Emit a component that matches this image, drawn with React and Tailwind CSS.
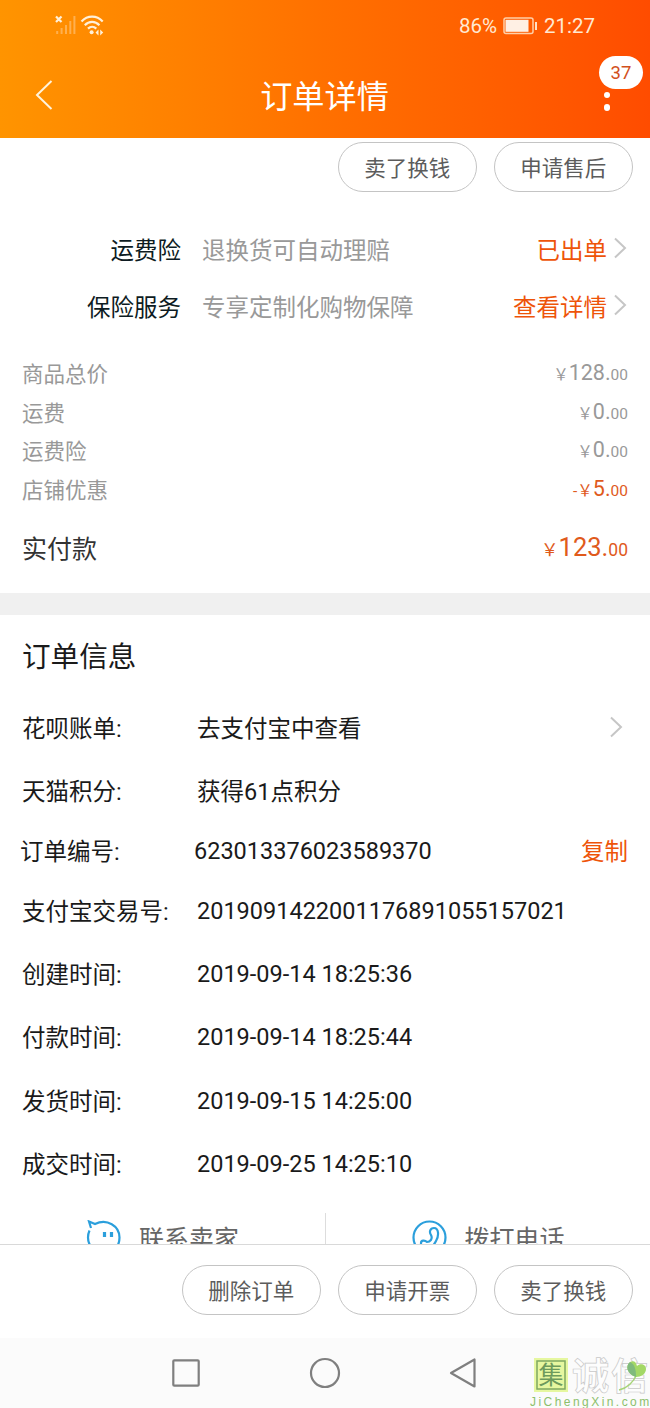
const SERVICES = [
  { label: '运费险', text: '退换货可自动理赔', action: '已出单' },
  { label: '保险服务', text: '专享定制化购物保障', action: '查看详情' },
]

const PRICES = [
  { label: '商品总价', whole: '128' },
  { label: '运费', whole: '0' },
  { label: '运费险', whole: '0' },
  { label: '店铺优惠', whole: '5', discount: true },
]

const TIMES = [
  { label: '创建时间:', value: '2019-09-14 18:25:36' },
  { label: '付款时间:', value: '2019-09-14 18:25:44' },
  { label: '发货时间:', value: '2019-09-15 14:25:00' },
  { label: '成交时间:', value: '2019-09-25 14:25:10' },
]

function PillButton({ children }) {
  return (
    <button className="h-[50px] w-[138.5px] rounded-full border border-[#c4c4c4] bg-white pt-[3px] text-[21.5px] leading-none text-[#5c5c5c]">
      {children}
    </button>
  )
}

function Chevron({ className }) {
  return (
    <svg className={className} width="14" height="22" viewBox="0 0 14 22" fill="none" stroke="#c6c6c6" strokeWidth="2">
      <path d="M2 1.5 12 11 2 20.5" />
    </svg>
  )
}

function InfoRow({ label, value, className = 'h-[63px]', labelClass = 'w-[175px]', valueClass = '', children }) {
  return (
    <div className={`flex items-center ${className}`}>
      <span className={`shrink-0 pt-[2px] ${labelClass}`}>{label}</span>
      <span className={`flex-1 ${valueClass}`}>{value}</span>
      {children}
    </div>
  )
}

function StatusBar() {
  return (
    <div className="flex h-[51px] items-center justify-between pl-[55px] pr-[55px] text-[20.5px] text-[#ffe9d2]">
      <svg width="50" height="22" viewBox="0 0 50 22" fill="none">
        <path d="M1 1.5l5.500 5.500M6.5 1.5 1 7" stroke="#fff0d8" strokeWidth="2.200" />
        <path d="M2.2 19v-3M6.6 19v-6M11 19V10M15.3 19V6M19.4 19V1" stroke="#ffb04f" strokeWidth="2" />
        <g stroke="#fff0d8" strokeWidth="2.200">
          <path d="M26.5 6.500c6-6.400 15.200-6.400 21.200 0" />
          <path d="M29.8 10.200c4.200-4.400 10.400-4.400 14.600 0" />
          <path d="M33 13.600c2.500-2.500 5.800-2.500 8.300 0" />
        </g>
        <circle cx="36.6" cy="17.3" r="2" fill="#fff0d8" />
        <path d="M43.5 14.500v6l-3-3zM45.2 14.500v6l3-3z" fill="#fff0d8" />
      </svg>
      <div className="flex items-center">
        <span className="pt-[2px]">86%</span>
        <svg className="ml-[6px] mr-[6px]" width="35" height="18" viewBox="0 0 35 18">
          <rect x="1" y="1" width="29" height="15.500" rx="2" fill="none" stroke="#ffcfa8" strokeWidth="1.5" />
          <rect x="2.5" y="2.800" width="23" height="12" fill="#fff0e4" />
          <path d="M33 5v8" stroke="#ffe0c4" strokeWidth="2" />
        </svg>
        <span className="pt-[2px]">21:27</span>
      </div>
    </div>
  )
}

function Header() {
  return (
    <header className="h-[138px] shrink-0 bg-linear-to-r from-[#ff9400] via-[#ff7000] to-[#ff4c00]">
      <StatusBar />
      <div className="flex h-[87px] items-center justify-between pl-[35px] pr-[39px]">
        <svg width="18" height="30" viewBox="0 0 18 30" fill="none" stroke="#fff3dc" strokeWidth="2">
          <path d="M16.5 1 2 15l14.5 14" />
        </svg>
        <h1 className="mr-[7px] pt-[5px] text-[32.2px] leading-none text-white">订单详情</h1>
        <div className="relative flex h-8 w-2 flex-col items-center justify-end gap-[6px]">
          <i className="size-[6.5px] rounded-full bg-white" />
          <i className="size-[6.5px] rounded-full bg-white" />
          <span className="absolute -top-[23px] -left-[4px] flex h-[33px] w-[44px] items-center justify-center rounded-full bg-white pt-[2px] text-[18.5px] text-[#d2501c]">
            37
          </span>
        </div>
      </div>
    </header>
  )
}

function Watermark() {
  return (
    <div className="absolute right-0 bottom-0 w-[123px]">
      <svg width="123" height="58" viewBox="0 0 123 58">
        <rect x="7" y="8" width="34" height="34" fill="#e6f7a0" />
        <rect x="10" y="11" width="28" height="28" fill="none" stroke="#7fa860" strokeWidth="1.5" />
        <text x="24" y="34" textAnchor="middle" fontSize="25" fill="#6d9a5c">集</text>
        <text x="45" y="40" fontSize="37" letterSpacing="2" fontWeight="700" fill="#fdfdfd" stroke="#c8c8c8" strokeWidth="0.7">诚信</text>
        <path d="M92 40c9-2 14-7 18-16" fill="none" stroke="#a6d478" strokeWidth="1.5" />
        <path d="M109 27c-9-3-11-11-6-15 4-2 6 0 7 4 3-3 9-2 9 3s-5 8-10 8z" fill="#a3d866" />
        <path d="M109 27c-9-3-11-11-6-15 5 2 6 8 6 15z" fill="#7fba7c" />
        <text x="3" y="55.500" fontSize="12" letterSpacing="2.450" fill="#8cc06c" fontFamily="Liberation Sans">JiChengXin.com</text>
      </svg>
    </div>
  )
}

export default function App() {
  return (
    <div className="flex h-[1408px] w-[650px] flex-col overflow-hidden bg-white font-['Roboto','Noto_Sans_CJK_SC',sans-serif] text-[23.5px] leading-none text-[#1a1a1a]">
      <Header />

      <main className="h-[1106px] shrink-0 overflow-hidden">
        <div className="flex justify-end gap-[17.5px] pt-[4px] pr-[17.5px]">
          <PillButton>卖了换钱</PillButton>
          <PillButton>申请售后</PillButton>
        </div>

        <section className="mt-[31px]">
          {SERVICES.map((s) => (
            <div key={s.label} className="flex h-[57px] items-center pr-[23px]">
              <span className="w-[181px] text-right text-[#0d1b22]">{s.label}</span>
              <span className="ml-[21px] flex-1 text-[#999]">{s.text}</span>
              <span className="text-[#ee5409]">{s.action}</span>
              <Chevron className="ml-[6px] -mt-[8px]" />
            </div>
          ))}
        </section>

        <section className="mt-[18px] px-[22px]">
          {PRICES.map((p) => (
            <div key={p.label} className="flex h-[38.6px] items-center justify-between text-[21.5px] text-[#999]">
              <span className="pt-[1px]">{p.label}</span>
              <span className={`pb-[3px] ${p.discount ? 'text-[#e05a1c]' : ''}`}>
                <span className="text-[15.5px]">{p.discount && '-'}￥</span>
                {p.whole}.<span className="text-[15.5px]">00</span>
              </span>
            </div>
          ))}
          <div className="mt-[16px] flex h-[48px] items-center justify-between text-[25px] text-[#333]">
            <span className="pt-[1px]">实付款</span>
            <span className="pb-[3px] text-[25.5px] text-[#e05a1c]">
              <span className="text-[17.5px]">￥</span>123.<span className="text-[17.5px]">00</span>
            </span>
          </div>
        </section>

        <div className="mt-[20px] h-[22px] bg-[#f0f0f0]" />

        <section className="px-[22px]">
          <h2 className="flex h-[82px] items-center pt-[1px] text-[28.6px]">订单信息</h2>
          <InfoRow label="花呗账单:" value="去支付宝中查看" valueClass="pt-[2px]">
            <Chevron className="mr-[5px] -mt-[3px]" />
          </InfoRow>
          <InfoRow label="天猫积分:" value="获得61点积分" valueClass="pt-[2px]" />
          <InfoRow label="订单编号:" value="623013376023589370" className="-ml-[2px] h-[57px]" labelClass="w-[174px]">
            <span className="pt-[2px] text-[#ee5409]">复制</span>
          </InfoRow>
          <InfoRow label="支付宝交易号:" value="2019091422001176891055157021" />
          {TIMES.map((t) => (
            <InfoRow key={t.label} {...t} className="h-[63.2px]" />
          ))}
        </section>

        <section className="mt-[17px] flex h-[50px] text-[25px] text-[#666]">
          <div className="flex flex-1 items-center border-r border-[#ddd] pl-[86px]">
            <svg className="mr-[17px]" width="36" height="36" viewBox="0 0 36 36" fill="none" stroke="#2b9fdc" strokeWidth="2.2">
              <path d="M5 8 3 1.500 9 4C21-2 33.500 6 33.500 17.500S24 34 17.500 34 2 27 2 17.500c0-3 .6-5 1.500-7" />
              <path d="M18.5 12v5M25.5 12v5" strokeWidth="3.2" />
            </svg>
            <span className="pt-[3px]">联系卖家</span>
          </div>
          <div className="flex flex-1 items-center pl-[86px]">
            <svg className="mr-[17px]" width="36" height="36" viewBox="0 0 36 36" fill="none" stroke="#2b9fdc" strokeWidth="2.2">
              <circle cx="17.5" cy="17.5" r="16" />
              <path d="M9 23c0-3 4-3 6-1 3 0 6-3 4-7-2-3-1-7 3-7 5 0 5 8 2 13-3 6-8 10-12 8-2-1-3-4-3-6z" />
            </svg>
            <span className="pt-[3px]">拨打电话</span>
          </div>
        </section>
      </main>

      <footer className="flex h-[94px] shrink-0 items-center justify-end gap-[17.5px] border-t border-[#d9d9d9] pr-[17.5px] pb-[3px]">
        <PillButton>删除订单</PillButton>
        <PillButton>申请开票</PillButton>
        <PillButton>卖了换钱</PillButton>
      </footer>

      <nav className="relative flex h-[70px] shrink-0 items-center bg-[#fbfbfb] pl-[172px]">
        <svg width="306" height="32" viewBox="0 0 306 32" fill="none" stroke="#7f7f7f" strokeWidth="2.2" strokeLinejoin="round">
          <rect x="1.3" y="3.3" width="25.4" height="25.4" rx="1" />
          <circle cx="153" cy="16" r="14" />
          <path d="M302.5 2.5v27L279 16z" />
        </svg>
        <Watermark />
      </nav>
    </div>
  )
}
